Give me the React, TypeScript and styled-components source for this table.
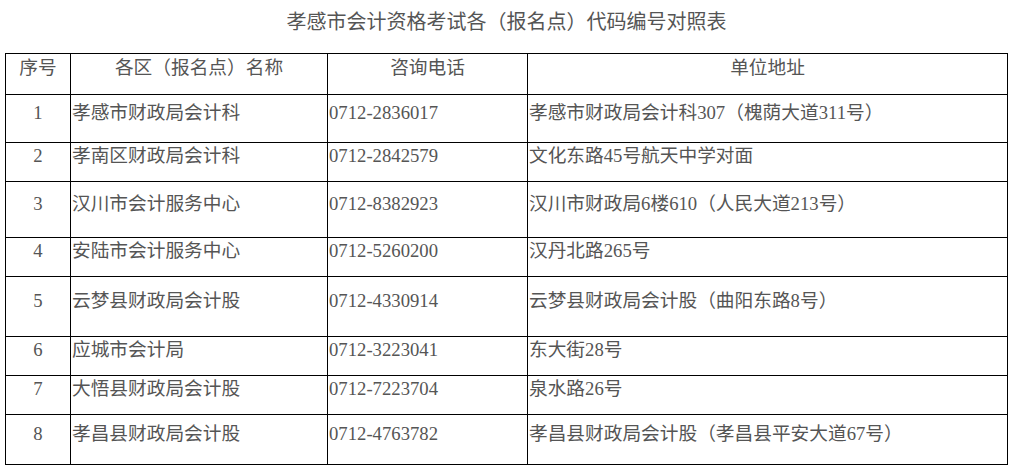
import React from 'react';
import styled, { createGlobalStyle } from 'styled-components';

type Office = {
  name: string;
  phone: string;
  address: string;
  height: number;
};

const offices: Office[] = [
  { name: '孝感市财政局会计科', phone: '0712-2836017', address: '孝感市财政局会计科307（槐荫大道311号）', height: 48 },
  { name: '孝南区财政局会计科', phone: '0712-2842579', address: '文化东路45号航天中学对面', height: 39 },
  { name: '汉川市会计服务中心', phone: '0712-8382923', address: '汉川市财政局6楼610（人民大道213号）', height: 56 },
  { name: '安陆市会计服务中心', phone: '0712-5260200', address: '汉丹北路265号', height: 39 },
  { name: '云梦县财政局会计股', phone: '0712-4330914', address: '云梦县财政局会计股（曲阳东路8号）', height: 60 },
  { name: '应城市会计局', phone: '0712-3223041', address: '东大街28号', height: 39 },
  { name: '大悟县财政局会计股', phone: '0712-7223704', address: '泉水路26号', height: 39 },
  { name: '孝昌县财政局会计股', phone: '0712-4763782', address: '孝昌县财政局会计股（孝昌县平安大道67号）', height: 50 },
];

export default function App() {
  return (
    <>
      <GlobalStyle />
      <Page>
        <Title>孝感市会计资格考试各（报名点）代码编号对照表</Title>
        <Table>
          <colgroup>
            <col style={{ width: 65 }} />
            <col style={{ width: 257 }} />
            <col style={{ width: 200 }} />
            <col style={{ width: 480 }} />
          </colgroup>
          <thead>
            <Row $height={41}>
              <HeadCell>序号</HeadCell>
              <HeadCell>各区（报名点）名称</HeadCell>
              <HeadCell>咨询电话</HeadCell>
              <HeadCell>单位地址</HeadCell>
            </Row>
          </thead>
          <tbody>
            {offices.map((o, i) => (
              <Row key={o.phone} $height={o.height}>
                <Cell $center>{i + 1}</Cell>
                <Cell>{o.name}</Cell>
                <Cell>{o.phone}</Cell>
                <Cell>{o.address}</Cell>
              </Row>
            ))}
          </tbody>
        </Table>
      </Page>
    </>
  );
}

const GlobalStyle = createGlobalStyle`
  body {
    margin: 0;
    background: #fff;
    font-family: "Liberation Serif", "Noto Sans CJK SC", serif;
    color: #555;
  }
`;

const Page = styled.div`
  padding: 6px 5px 0;
`;

const Title = styled.h1`
  margin: 0;
  height: 47px;
  font-size: 20px;
  font-weight: normal;
  line-height: 32px;
  text-align: center;
  color: #555;
`;

const Table = styled.table`
  width: 1002px;
  border-collapse: collapse;
  table-layout: fixed;
  font-size: 18.7px;
`;

const Row = styled.tr<{ $height: number }>`
  height: ${(p) => p.$height}px;
`;

const HeadCell = styled.th`
  border: 1px solid #000;
  font-weight: normal;
  text-align: center;
  vertical-align: middle;
  padding: 0 1px 12px;
  line-height: 22px;
`;

const Cell = styled.td<{ $center?: boolean }>`
  border: 1px solid #000;
  text-align: ${(p) => (p.$center ? 'center' : 'left')};
  vertical-align: middle;
  padding: 0 1px 12px;
  line-height: 22px;
  white-space: nowrap;
`;
